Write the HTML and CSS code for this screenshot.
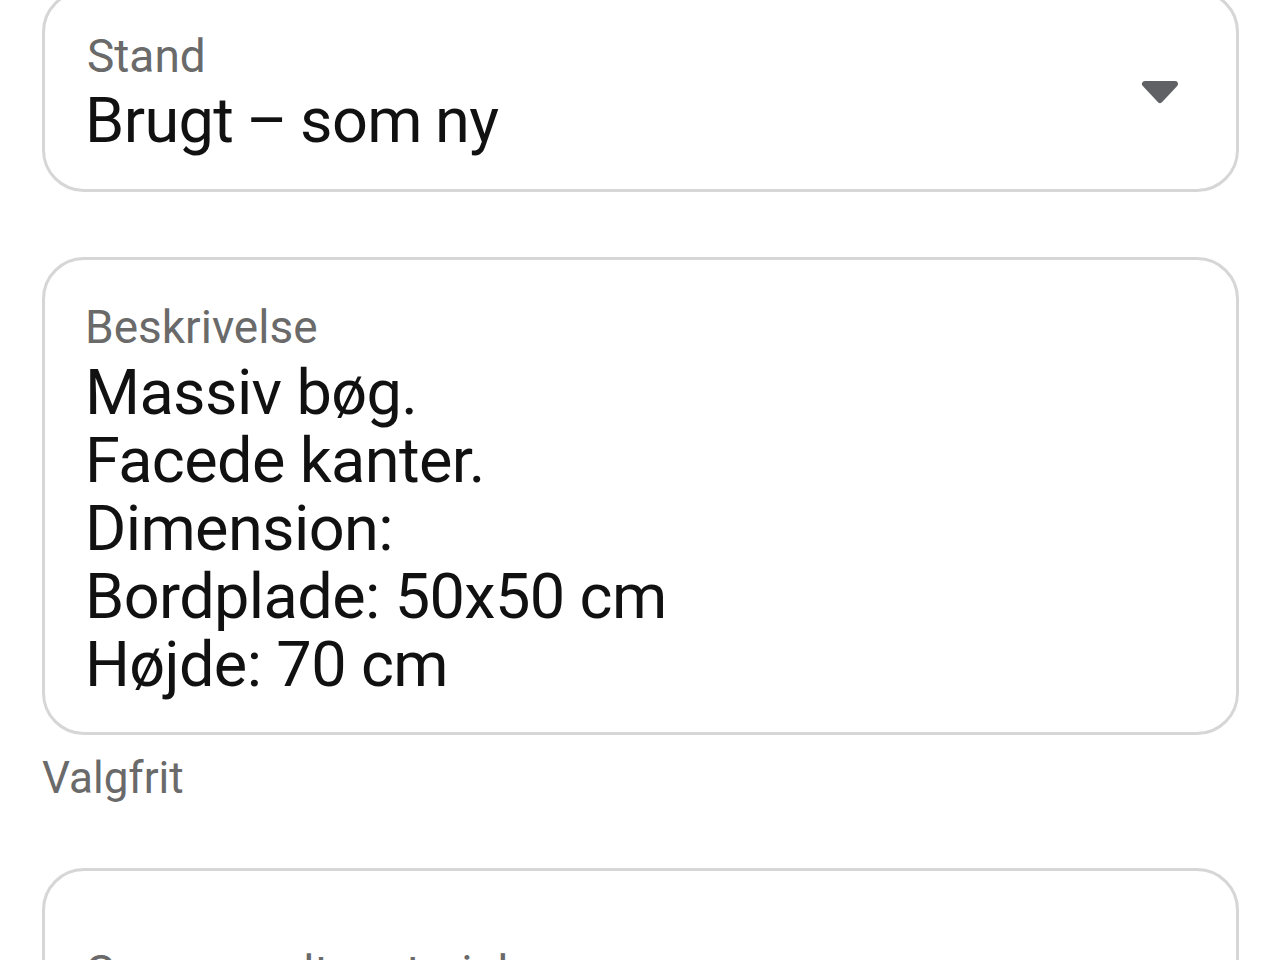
FILE: index.html
```html
<!DOCTYPE html>
<html lang="da">
<head>
  <meta charset="UTF-8">
  <title>Opret annonce</title>
  <link rel="stylesheet" href="styles.css">
</head>
<body>
  <form class="form">
    <div class="field field-select">
      <div class="field-body">
        <div class="label">Stand</div>
        <div class="value">Brugt – som ny</div>
      </div>
      <svg class="caret" width="40" height="24" viewBox="0 0 40 24">
        <path d="M5 4 L35 4 L20 20 Z" fill="#5f6164" stroke="#5f6164" stroke-width="6" stroke-linejoin="round"/>
      </svg>
    </div>

    <div class="field field-text">
      <div class="label">Beskrivelse</div>
      <div class="value">Massiv bøg.<br>Facede kanter.<br>Dimension:<br>Bordplade: 50x50 cm<br>Højde: 70 cm</div>
    </div>
    <div class="hint">Valgfrit</div>

    <div class="field field-empty">
      <div class="label">Genanvendt materiale</div>
    </div>
  </form>
</body>
</html>
```

FILE: styles.css
```css
body {
  margin: 0;
  background-color: #fff;
  font-family: Roboto, 'Liberation Sans', sans-serif;
  color: #111;
  overflow: hidden;
}
.form {
  display: flex;
  flex-direction: column;
  padding: 0 41px 0 42px;
  margin-top: -10px;
}
.field {
  border: 3px solid #d6d6d6;
  border-radius: 42px;
  padding: 0 40px 0 40px;
}
.label {
  font-size: 46px;
  line-height: 56px;
  color: #6a6a6a;
}
.value {
  font-size: 63px;
  line-height: 68px;
  letter-spacing: -0.6px;
  color: #111;
}
.field-select {
  display: flex;
  align-items: center;
  justify-content: space-between;
  padding-top: 35px;
  padding-bottom: 34px;
  padding-right: 56px;
}
.field-select .label {
  padding-left: 2px;
}
.field-select .value {
  margin-top: 3px;
  word-spacing: -2px;
}
.field-text {
  margin-top: 65px;
  padding-top: 39px;
  padding-bottom: 33px;
}
.field-text .value {
  margin-top: 4px;
}
.hint {
  font-size: 44px;
  line-height: 52px;
  color: #6a6a6a;
  margin-top: 17px;
}
.field-empty {
  margin-top: 64px;
  padding-top: 73px;
  height: 200px;
}
```
